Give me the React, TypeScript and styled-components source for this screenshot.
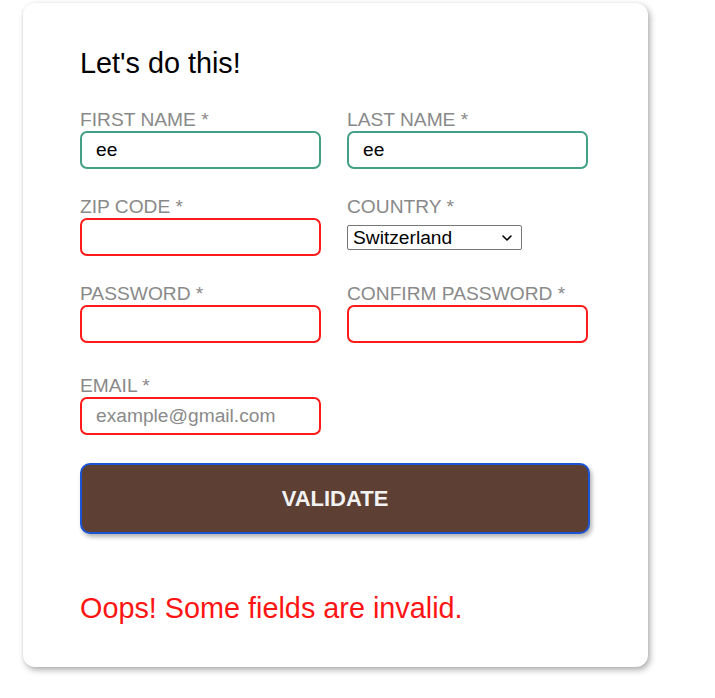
import React from "react";
import styled, { createGlobalStyle } from "styled-components";

const Global = createGlobalStyle`
  html, body { margin: 0; padding: 0; background: #ffffff; }
  body { font-family: "Liberation Sans", Arial, Helvetica, sans-serif; }
  * { box-sizing: border-box; }
`;

const Page = styled.div`
  padding: 3px 0 20px 23px;
`;

const Card = styled.form`
  width: 625px;
  height: 664px;
  background: #ffffff;
  border-radius: 12px;
  box-shadow: 2px 3px 6px rgba(0, 0, 0, 0.32), 0 0 3px rgba(0, 0, 0, 0.06);
  padding: 44px 58px 0 57px;
  display: flex;
  flex-direction: column;
`;

const Title = styled.h2`
  margin: 0;
  font-size: 28.8px;
  line-height: 33px;
  font-weight: 400;
  color: #000;
`;

const Grid = styled.div`
  margin-top: 29px;
  display: grid;
  grid-template-columns: 241px 241px;
  column-gap: 26px;
  row-gap: 27px;
`;

const Field = styled.div`
  display: flex;
  flex-direction: column;
  align-items: flex-start;
`;

const EmailField = styled(Field)`
  margin-top: 32px;
`;

const Label = styled.label`
  font-size: 19.2px;
  line-height: 22px;
  color: #898989;
  text-transform: uppercase;
  white-space: nowrap;
`;

const Input = styled.input<{ $state: "valid" | "invalid" }>`
  width: 241px;
  height: 38px;
  border: 2px solid ${(p) => (p.$state === "valid" ? "#43a085" : "#ff1a1a")};
  border-radius: 7px;
  padding: 0 14px;
  font-family: "Liberation Sans", Arial, sans-serif;
  font-size: 19.2px;
  color: #000;
  background: #fff;
  outline: none;
  &::placeholder { color: #8a8a8a; }
`;

const SelectWrap = styled.div`
  position: relative;
  margin: 7px 0 6px;
  width: 175px;
  height: 25px;
`;

const Select = styled.select`
  appearance: none;
  -webkit-appearance: none;
  width: 175px;
  height: 25px;
  border: 1px solid #767676;
  border-radius: 2px;
  background: #fff;
  padding: 0 0 0 5px;
  font-family: "Liberation Sans", Arial, sans-serif;
  font-size: 19.2px;
  color: #000;
  outline: none;
`;

const Chevron = styled.svg`
  position: absolute;
  right: 10px;
  top: 10px;
  pointer-events: none;
`;

const Button = styled.button`
  margin-top: 28px;
  width: 510px;
  height: 71px;
  background: #5d4033;
  border: 2px solid #1b55d4;
  border-radius: 10px;
  box-shadow: 2px 3px 4px rgba(0, 0, 0, 0.3);
  color: #f2f2f2;
  font-family: "Liberation Sans", Arial, sans-serif;
  font-size: 22px;
  font-weight: 700;
  cursor: pointer;
`;

const ErrorText = styled.p`
  margin: 58px 0 0;
  font-size: 28.8px;
  line-height: 33px;
  color: #ff1414;
`;

export default function App() {
  return (
    <>
      <Global />
      <Page>
        <Card onSubmit={(e) => e.preventDefault()}>
          <Title>Let's do this!</Title>
          <Grid>
            <Field>
              <Label>First name *</Label>
              <Input $state="valid" defaultValue="ee" />
            </Field>
            <Field>
              <Label>Last name *</Label>
              <Input $state="valid" defaultValue="ee" />
            </Field>
            <Field>
              <Label>Zip code *</Label>
              <Input $state="invalid" />
            </Field>
            <Field>
              <Label>Country *</Label>
              <SelectWrap>
                <Select defaultValue="Switzerland">
                  <option>Switzerland</option>
                  <option>France</option>
                  <option>Germany</option>
                  <option>Italy</option>
                </Select>
                <Chevron width="10" height="6" viewBox="0 0 10 6">
                  <path d="M1 1 L5 5 L9 1" fill="none" stroke="#000" strokeWidth="1.6" strokeLinecap="round" strokeLinejoin="round" />
                </Chevron>
              </SelectWrap>
            </Field>
            <Field>
              <Label>Password *</Label>
              <Input $state="invalid" type="password" />
            </Field>
            <Field>
              <Label>Confirm password *</Label>
              <Input $state="invalid" type="password" />
            </Field>
          </Grid>
          <EmailField>
            <Label>Email *</Label>
            <Input $state="invalid" type="email" placeholder="example@gmail.com" />
          </EmailField>
          <Button type="submit">VALIDATE</Button>
          <ErrorText>Oops! Some fields are invalid.</ErrorText>
        </Card>
      </Page>
    </>
  );
}
